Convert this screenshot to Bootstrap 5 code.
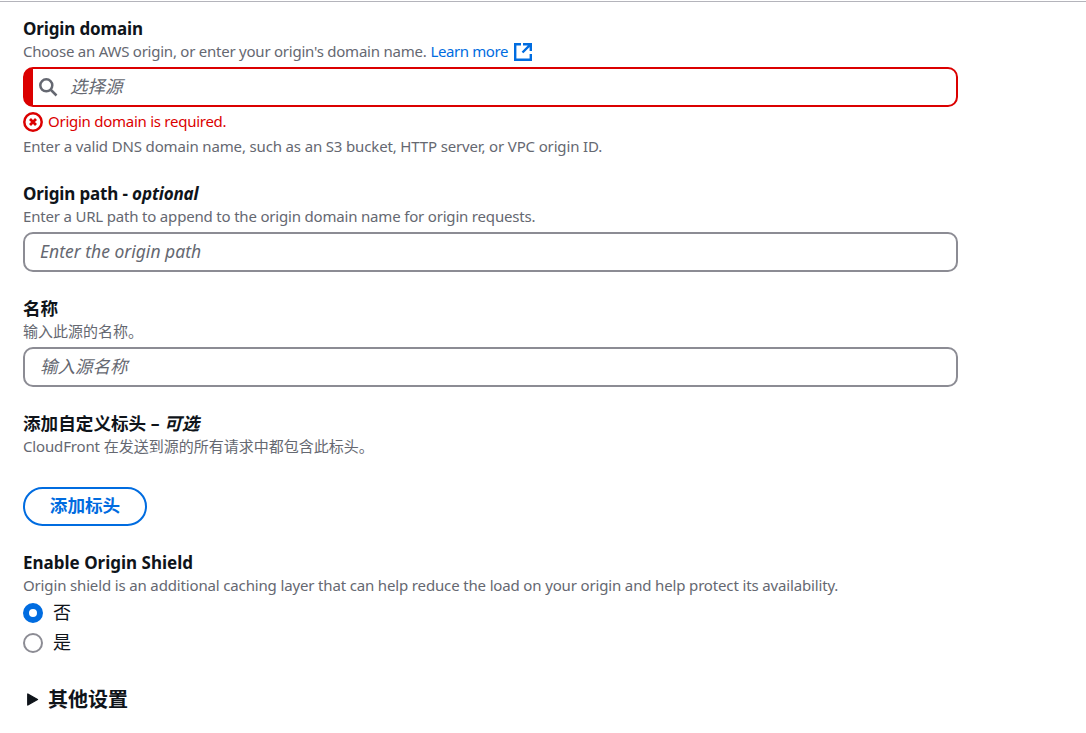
<!DOCTYPE html>
<html lang="zh-CN">
<head>
<meta charset="utf-8">
<meta name="viewport" content="width=device-width, initial-scale=1">
<title>Origin settings</title>
<link href="https://cdn.jsdelivr.net/npm/bootstrap@5.3.0/dist/css/bootstrap.min.css" rel="stylesheet">
<style>
  body { font-family: "Noto Sans", "Noto Sans CJK SC", sans-serif; color: #0f141a; font-size: 17.5px; line-height: 25px; overflow: hidden; }
  .origin-panel { border-top: 1px solid #b4b4bb; margin-top: 1px; padding: 14px 0 0 23px; }
  .origin-form { width: 935px; }
  .field { margin-bottom: 24px; }
  .field-title { display: block; font-weight: 700; font-size: 17px; line-height: 25px; height: 25px; white-space: nowrap; letter-spacing: -.14px; }
  .title-cjk { font-size: 17.6px; letter-spacing: 0; }
  .title-plain { letter-spacing: 0; }
  .field-hint { font-size: 15px; line-height: 20px; height: 20px; color: #656871; white-space: nowrap; letter-spacing: -.15px; }
  .hint-choose { letter-spacing: -.235px; }
  .hint-path { letter-spacing: -.185px; }
  .hint-cjk { letter-spacing: 0; }
  .hint-cjk span { letter-spacing: -.15px; }
  .field-hint a { color: #006ce0; text-decoration: none; letter-spacing: -.4px; }
  .link-icon { margin: 2px 0 0 5px; }
  .field .form-control { height: 40px; margin-top: 6px; border: 2px solid #8c8c94; border-radius: 10px; padding: 2px 15px 4px; font-size: 17.5px; line-height: 25px; }
  .form-control::placeholder { color: #656871; font-style: italic; opacity: 1; }
  .field .search-input { border-color: #db0000; border-left-width: 10px; padding-left: 37px; }
  .search-icon { left: 15px; top: 10px; }
  .error-line { color: #db0000; font-size: 15px; line-height: 20px; height: 20px; margin: 5px 0 4px; gap: 5px; letter-spacing: -.26px; }
  .error-line span { padding-bottom: 1px; margin-bottom: 1px; }
  .error-line svg { flex: none; }
  .after-error { height: 21px; }
  .btn-add { width: 124px; height: 39px; border: 2px solid #006ce0; border-radius: 20px; color: #006ce0; font-size: 17.6px; font-weight: 700; line-height: 25px; padding: 4px 0 6px; margin-top: 31px; }
  .field .form-check { display: flex; align-items: center; gap: 10px; min-height: 0; height: 20px; margin: 0 0 10px; padding: 0; }
  .form-check label { font-size: 18px; line-height: 25px; padding-bottom: 1px; }
  .form-check .form-check-input { float: none; flex: none; margin: 0; width: 20px; height: 20px; border: 2px solid #8c8c94; }
  .form-check .form-check-input:checked { border: 6px solid #006ce0; background: #fff; }
  .more-title { font-size: 20px; font-weight: 700; line-height: 30px; margin-top: 32px; }
  .more-title svg { margin-right: 8px; }
</style>
</head>
<body class="bg-white">
<main class="origin-panel">
  <form class="origin-form">
    <div class="field">
      <label class="field-title" for="domain">Origin domain</label>
      <div class="field-hint hint-choose d-flex"><span>Choose an AWS origin, or enter your origin's domain name.</span>
        <a href="#" class="d-flex align-items-center ms-1"><span>Learn more</span>
          <svg class="link-icon" width="20" height="20" viewBox="0 0 20 20" fill="none" stroke="#006ce0" stroke-width="2.4"><path d="M8 2.2H2.2v15.6h15.6V12M10 2.2h7.8V9M17.8 2.2L9.5 10.5"/></svg></a>
      </div>
      <div class="position-relative">
        <input id="domain" class="form-control search-input" placeholder="选择源">
        <svg class="search-icon position-absolute" width="20" height="20" viewBox="0 0 20 20" fill="none" stroke="#656871" stroke-width="2.5"><circle cx="8.3" cy="8.3" r="6"/><path d="M12.5 12.5L18.5 18.5"/></svg>
      </div>
      <div class="error-line d-flex align-items-center">
        <svg width="20" height="20" viewBox="0 0 20 20" fill="none" stroke="#db0000" stroke-width="2.5"><circle cx="10" cy="10" r="8.7"/><path stroke-width="2.8" d="M7 7l6 6M13 7l-6 6"/></svg>
        <span>Origin domain is required.</span>
      </div>
      <div class="field-hint after-error">Enter a valid DNS domain name, such as an S3 bucket, HTTP server, or VPC origin ID.</div>
    </div>
    <div class="field">
      <label class="field-title" for="path">Origin path - <em>optional</em></label>
      <div class="field-hint hint-path">Enter a URL path to append to the origin domain name for origin requests.</div>
      <input id="path" class="form-control" placeholder="Enter the origin path">
    </div>
    <div class="field">
      <label class="field-title title-cjk" for="name">名称</label>
      <div class="field-hint hint-cjk">输入此源的名称。</div>
      <input id="name" class="form-control" placeholder="输入源名称">
    </div>
    <div class="field">
      <div class="field-title title-cjk">添加自定义标头 – <em>可选</em></div>
      <div class="field-hint hint-cjk"><span>CloudFront</span> 在发送到源的所有请求中都包含此标头。</div>
      <button type="button" class="btn btn-add">添加标头</button>
    </div>
    <div class="field">
      <div class="field-title title-plain">Enable Origin Shield</div>
      <div class="field-hint mb-2">Origin shield is an additional caching layer that can help reduce the load on your origin and help protect its availability.</div>
      <div class="form-check"><input class="form-check-input" type="radio" name="shield" id="no" checked><label for="no">否</label></div>
      <div class="form-check"><input class="form-check-input" type="radio" name="shield" id="yes"><label for="yes">是</label></div>
    </div>
    <div class="more-title d-flex align-items-center"><svg width="17" height="20" viewBox="0 0 17 20" fill="#0f141a"><path d="M4.8 4v11L14.5 9.5z" stroke="#0f141a" stroke-width="1.4" stroke-linejoin="round"/></svg>其他设置</div>
  </form>
</main>
<script src="https://cdn.jsdelivr.net/npm/bootstrap@5.3.0/dist/js/bootstrap.bundle.min.js"></script>
</body>
</html>
